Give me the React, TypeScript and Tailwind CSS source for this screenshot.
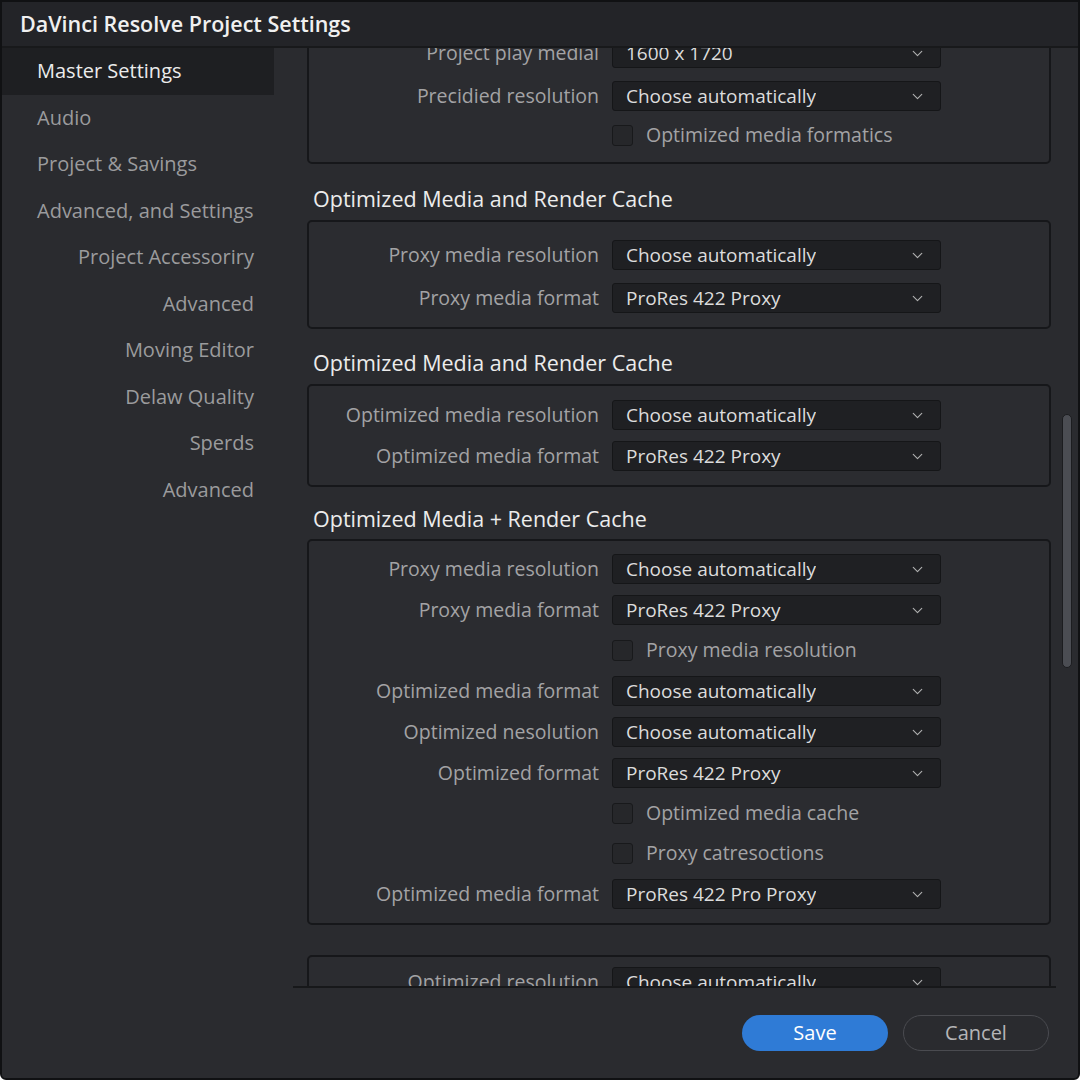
import { ChevronDown } from "lucide-react";

type Row =
  | { kind: "select"; label: string; value: string; mt?: string }
  | { kind: "check"; label: string; mt?: string };

const navItems = [
  { label: "Master Settings", align: "left", active: true },
  { label: "Audio", align: "left" },
  { label: "Project & Savings", align: "left" },
  { label: "Advanced, and Settings", align: "left" },
  { label: "Project Accessoriry", align: "right" },
  { label: "Advanced", align: "right" },
  { label: "Moving Editor", align: "right" },
  { label: "Delaw Quality", align: "right" },
  { label: "Sperds", align: "right" },
  { label: "Advanced", align: "right" },
];

function Select({ value }: { value: string }) {
  return (
    <div className="flex h-[30px] w-[329px] items-center justify-between rounded-[3px] border border-[#151618] bg-[#1f2023] pl-[13px] pr-[14px] text-[19px] text-[#dcdcdc]">
      <span className="truncate">{value}</span>
      <ChevronDown size={17} strokeWidth={1.6} className="text-[#b0b0b0]" />
    </div>
  );
}

function Field({ row }: { row: Row }) {
  return (
    <div className={`flex h-[30px] items-center ${row.mt ?? ""}`}>
      <div className="w-[303px] shrink-0 pr-[13px] text-right text-[19.5px] text-[#a3a3a5]">
        {row.kind === "select" ? row.label : ""}
      </div>
      {row.kind === "select" ? (
        <Select value={row.value} />
      ) : (
        <div className="flex items-center gap-[13px] text-[19.5px] text-[#a3a3a5]">
          <div className="h-[21px] w-[21px] rounded-[3px] border border-[#18191b] bg-[#26272a]" />
          <span>{row.label}</span>
        </div>
      )}
    </div>
  );
}

function Box({ rows, className }: { rows: Row[]; className: string }) {
  return (
    <div className={`rounded-[5px] border-2 border-[#16171a] bg-[#2b2c30] ${className}`}>
      {rows.map((r, i) => (
        <Field key={i} row={r} />
      ))}
    </div>
  );
}

function Heading({ children, className }: { children: string; className: string }) {
  return (
    <div className={`h-[28px] pl-[6px] text-[21.5px] leading-[28px] text-[#ececec] ${className}`}>
      {children}
    </div>
  );
}

export default function App() {
  return (
    <div
      className="flex h-[1080px] w-[1080px] flex-col overflow-hidden rounded-b-[6px] border-2 border-[#101113] bg-[#2a2b2f]"
      style={{ fontFamily: '"Open Sans", "Noto Sans", sans-serif' }}
    >
      <div className="z-10 flex h-[46px] shrink-0 items-center border-b-2 border-[#18191b] bg-[#232428] pl-[18px] text-[21.5px] font-semibold text-[#f0f0f0]">
        DaVinci Resolve Project Settings
      </div>

      <div className="flex min-h-0 flex-1">
        <div className="w-[272px] shrink-0 bg-[#2a2b2f]">
          {navItems.map((item, i) => (
            <div
              key={i}
              className={`flex h-[46.5px] items-center text-[20px] ${
                item.active ? "bg-[#1e1f22] text-[#ececec]" : "text-[#9b9b9d]"
              } ${item.align === "left" ? "pl-[35px]" : "justify-end pr-[20px]"}`}
            >
              {item.label}
            </div>
          ))}
        </div>

        <div className="flex min-w-0 flex-1 flex-col">
          <div className="flex min-h-0 flex-1">
            <div className="relative ml-[19px] min-w-0 flex-1 overflow-hidden border-b-2 border-[#17181a] pl-[14px]">
              <div className="-mt-[25px] w-[744px]">
                <Box
                  className="pt-[13px] pb-[12px]"
                  rows={[
                    { kind: "select", label: "Project play medial", value: "1600 x 1720" },
                    { kind: "select", label: "Precidied resolution", value: "Choose automatically", mt: "mt-[13px]" },
                    { kind: "check", label: "Optimized media formatics", mt: "mt-[9px]" },
                  ]}
                />
                <Heading className="mt-[21px] mb-[7px]">Optimized Media and Render Cache</Heading>
                <Box
                  className="pt-[18px] pb-[14px]"
                  rows={[
                    { kind: "select", label: "Proxy media resolution", value: "Choose automatically" },
                    { kind: "select", label: "Proxy media format", value: "ProRes 422 Proxy", mt: "mt-[13px]" },
                  ]}
                />
                <Heading className="mt-[20px] mb-[7px]">Optimized Media and Render Cache</Heading>
                <Box
                  className="pt-[14px] pb-[14px]"
                  rows={[
                    { kind: "select", label: "Optimized media resolution", value: "Choose automatically" },
                    { kind: "select", label: "Optimized media format", value: "ProRes 422 Proxy", mt: "mt-[11px]" },
                  ]}
                />
                <Heading className="mt-[18px] mb-[6px]">Optimized Media + Render Cache</Heading>
                <Box
                  className="pt-[13px] pb-[14px]"
                  rows={[
                    { kind: "select", label: "Proxy media resolution", value: "Choose automatically" },
                    { kind: "select", label: "Proxy media format", value: "ProRes 422 Proxy", mt: "mt-[11px]" },
                    { kind: "check", label: "Proxy media resolution", mt: "mt-[10px]" },
                    { kind: "select", label: "Optimized media format", value: "Choose automatically", mt: "mt-[11px]" },
                    { kind: "select", label: "Optimized nesolution", value: "Choose automatically", mt: "mt-[11px]" },
                    { kind: "select", label: "Optimized format", value: "ProRes 422 Proxy", mt: "mt-[11px]" },
                    { kind: "check", label: "Optimized media cache", mt: "mt-[10px]" },
                    { kind: "check", label: "Proxy catresoctions", mt: "mt-[10px]" },
                    { kind: "select", label: "Optimized media format", value: "ProRes 422 Pro Proxy", mt: "mt-[11px]" },
                  ]}
                />
                <Box
                  className="mt-[30px] pt-[10px] pb-[14px]"
                  rows={[
                    { kind: "select", label: "Optimized resolution", value: "Choose automatically" },
                  ]}
                />
              </div>
            </div>
            <div className="flex w-[22px] shrink-0 justify-center pt-[366px]">
              <div className="h-[254px] w-[10px] rounded-full border border-[#1c1d20] bg-[#4b4d53]" />
            </div>
          </div>

          <div className="flex h-[90px] shrink-0 items-center justify-end gap-[15px] pr-[29px]">
            <button className="h-[36px] w-[146px] rounded-full bg-[#2f7bd6] text-[20px] text-white">
              Save
            </button>
            <button className="h-[36px] w-[146px] rounded-full border border-[#4a4b50] text-[20px] text-[#b5b5b7]">
              Cancel
            </button>
          </div>
        </div>
      </div>
    </div>
  );
}
